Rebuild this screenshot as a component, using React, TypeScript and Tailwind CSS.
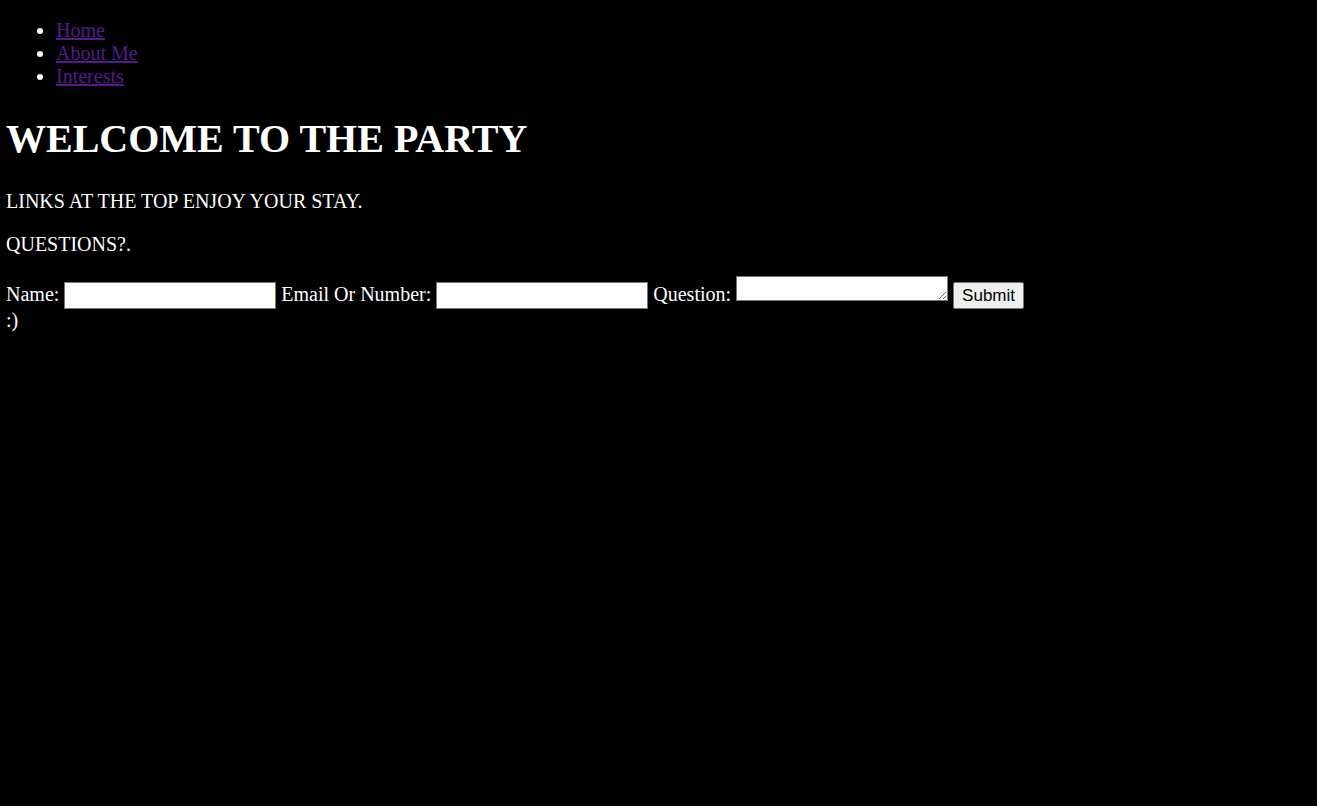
export default function App() {
  return (
    <div className="min-h-[806px] bg-black px-[6px] py-px text-white font-['Liberation_Serif',serif] text-[20px] leading-[23px]">
      <ul className="mt-[18px] mb-[20px] list-disc pl-[50px]">
        <li>
          <a href="#" className="text-[#551a8b] underline">Home</a>
        </li>
        <li>
          <a href="#" className="text-[#551a8b] underline">About Me</a>
        </li>
        <li>
          <a href="#" className="text-[#551a8b] underline">Interests</a>
        </li>
      </ul>
      <h1 className="mt-[27.8px] mb-[27.8px] text-[40px] leading-[46px] font-bold">WELCOME TO THE PARTY</h1>
      <p className="my-[20px]">LINKS AT THE TOP ENJOY YOUR STAY.</p>
      <p className="my-[20px]">QUESTIONS?.</p>
      <form className="mt-[20px]">
        Name:{" "}
        <input type="text" className="h-[27px] w-[212px] border border-[#767676] bg-white align-[-1px]" />{" "}
        Email Or Number:{" "}
        <input type="text" className="h-[27px] w-[212px] border border-[#767676] bg-white align-[-1px]" />{" "}
        Question:{" "}
        <textarea className="h-[25px] w-[212px] border border-[#767676] bg-white align-baseline" />{" "}
        <button
          type="button"
          className="h-[27px] w-[71px] rounded-[2px] border border-[#767676] bg-[#efefef] font-['Liberation_Sans',sans-serif] text-[17px] leading-none text-black align-baseline"
        >
          Submit
        </button>
        <br />
        :)
      </form>
    </div>
  )
}
